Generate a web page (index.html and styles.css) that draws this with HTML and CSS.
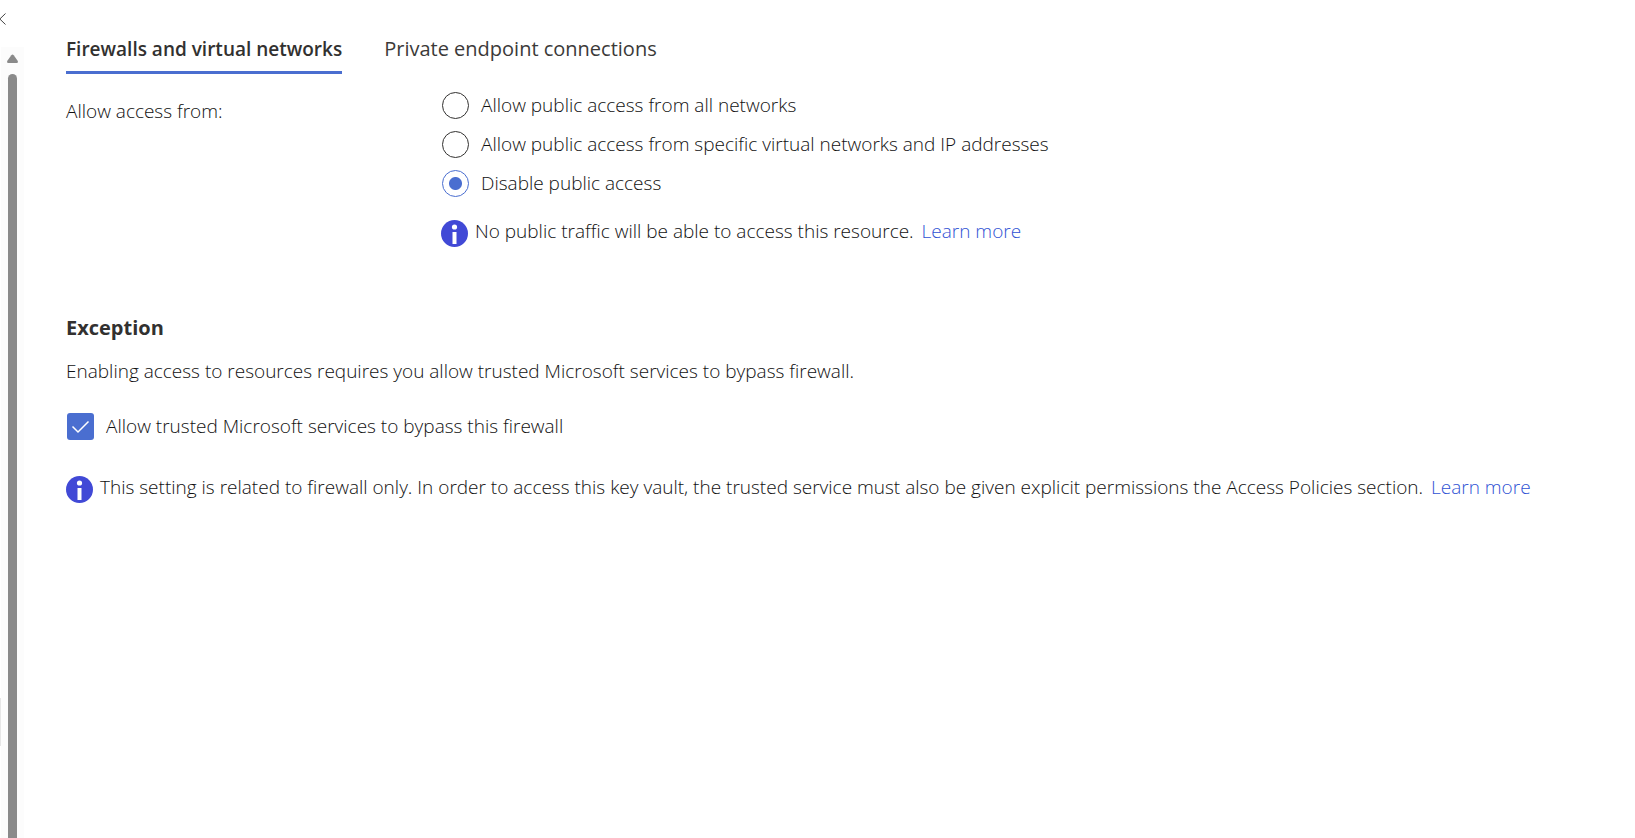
FILE: index.html
```html
<!DOCTYPE html>
<html lang="en">
<head>
<meta charset="utf-8">
<title>Networking</title>
<link rel="stylesheet" href="styles.css">
</head>
<body>
<div class="page">
  <aside class="rail">
    <button class="collapse" type="button" aria-label="Collapse menu">
      <svg width="8" height="12" viewBox="0 0 8 12"><path d="M5.5 0.5 -0.2 6 5.5 11.5" fill="none" stroke="#444" stroke-width="1"/></svg>
    </button>
    <div class="track">
      <svg class="arrow" width="13" height="10" viewBox="0 0 13 10"><path d="M5.3 1.2Q6.5 0 7.7 1.2L11.8 7Q12.6 9 10.8 9H2.2Q0.4 9 1.2 7Z" fill="#8a8a8a"/></svg>
      <div class="thumb"></div>
    </div>
    <div class="handle"></div>
  </aside>
  <main class="content">
    <nav class="tabs" role="tablist">
      <button class="tab tab-active" type="button" role="tab" aria-selected="true">Firewalls and virtual networks</button>
      <button class="tab" type="button" role="tab" aria-selected="false">Private endpoint connections</button>
    </nav>
    <section class="access">
      <div class="access-label" id="access-label">Allow access from:</div>
      <div class="options" role="radiogroup" aria-labelledby="access-label">
        <label class="choice"><input class="radio" type="radio" name="access">Allow public access from all networks</label>
        <label class="choice"><input class="radio" type="radio" name="access">Allow public access from specific virtual networks and IP addresses</label>
        <label class="choice"><input class="radio" type="radio" name="access" checked>Disable public access</label>
        <p class="info">
          <svg class="info-icon" viewBox="0 0 27 27"><circle cx="13.5" cy="13.5" r="13.5" fill="#4149d6"/><circle cx="13.5" cy="7" r="2.6" fill="#fff"/><rect x="11.5" y="12" width="4" height="12" fill="#fff"/></svg>
          <span>No public traffic will be able to access this resource. <a class="link" href="#">Learn more</a></span>
        </p>
      </div>
    </section>
    <section class="exception">
      <h2 class="heading">Exception</h2>
      <p class="text">Enabling access to resources requires you allow trusted Microsoft services to bypass firewall.</p>
      <label class="choice trusted">
        <span class="box"><input class="check" type="checkbox" checked><svg class="tick" viewBox="0 0 27 27"><path d="M5.5 13.5 11 19 21.5 8.5" fill="none" stroke="#fff" stroke-width="1.5"/></svg></span>
        Allow trusted Microsoft services to bypass this firewall
      </label>
      <p class="info">
        <svg class="info-icon" viewBox="0 0 27 27"><circle cx="13.5" cy="13.5" r="13.5" fill="#4149d6"/><circle cx="13.5" cy="7" r="2.6" fill="#fff"/><rect x="11.5" y="12" width="4" height="12" fill="#fff"/></svg>
        <span>This setting is related to firewall only. In order to access this key vault, the trusted service must also be given explicit permissions the Access Policies section. <a class="link" href="#">Learn more</a></span>
      </p>
    </section>
  </main>
</div>
</body>
</html>
```
FILE: styles.css
```css
* { box-sizing: border-box; }
body {
  margin: 0;
  background: #fff;
  color: #111;
  font: 300 19px/28px "Segoe UI", "Open Sans", "Noto Sans", sans-serif;
}
.page { display: flex; height: 100vh; overflow: hidden; }
.rail {
  position: relative;
  display: flex;
  flex-direction: column;
  flex: none;
  width: 24px;
}
.collapse {
  display: flex;
  height: 47px;
  padding: 13px 0 0;
  border: 0;
  background: none;
}
.track {
  display: flex;
  flex: 1;
  flex-direction: column;
  align-items: center;
  gap: 10px;
  margin-left: 1px;
  padding-top: 7px;
  background: #fcfcfc;
}
.arrow { flex: none; }
.thumb {
  flex: 1;
  width: 9px;
  border-radius: 5px 5px 0 0;
  background: #8a8a8a;
}
.handle {
  position: absolute;
  bottom: 92px;
  left: 0;
  width: 1px;
  height: 48px;
  background: #e6e6e6;
}
.content { flex: 1; min-width: 0; padding: 32px 24px 0 42px; }
.tabs { display: flex; gap: 42px; }
.tab {
  height: 42px;
  padding: 0 0 6px;
  border: 0;
  border-bottom: 3px solid transparent;
  background: none;
  color: #3b3a39;
  font: inherit;
  font-size: 20px;
  font-weight: 400;
}
.tab-active { border-bottom-color: #4a6ed0; color: #323130; font-size: 19px; font-weight: 600; }
.access { display: flex; padding-top: 17px; }
.access-label { flex: none; width: 375px; padding-top: 6px; }
.options { display: flex; flex-direction: column; gap: 11px; }
.choice { display: flex; align-items: center; gap: 12px; padding-left: 1px; }
.radio {
  width: 27px;
  height: 27px;
  margin: 0;
  border: 1px solid #323130;
  border-radius: 50%;
  appearance: none;
}
.radio:checked {
  border-color: #4a6ed0;
  background: radial-gradient(circle, #4a6ed0 6px, transparent 7px);
}
.info { display: flex; align-items: flex-start; gap: 7px; margin: 0; }
.options .info { padding-top: 9px; }
.info-icon { flex: none; width: 27px; height: 27px; margin-top: 3px; }
.link { margin-left: 3px; color: #2f52d4; text-decoration: none; }
.exception { padding-top: 67px; }
.heading { margin: 0; color: #323130; font-size: 20px; line-height: 28px; font-weight: 700; }
.text { margin: 15px 0 0; }
.trusted { padding-top: 27px; padding-bottom: 33px; }
.box { position: relative; width: 27px; height: 27px; }
.check {
  display: block;
  width: 27px;
  height: 27px;
  margin: 0;
  border-radius: 3px;
  background: #4a6ed0;
  appearance: none;
}
.tick { position: absolute; inset: 0; pointer-events: none; }
```
